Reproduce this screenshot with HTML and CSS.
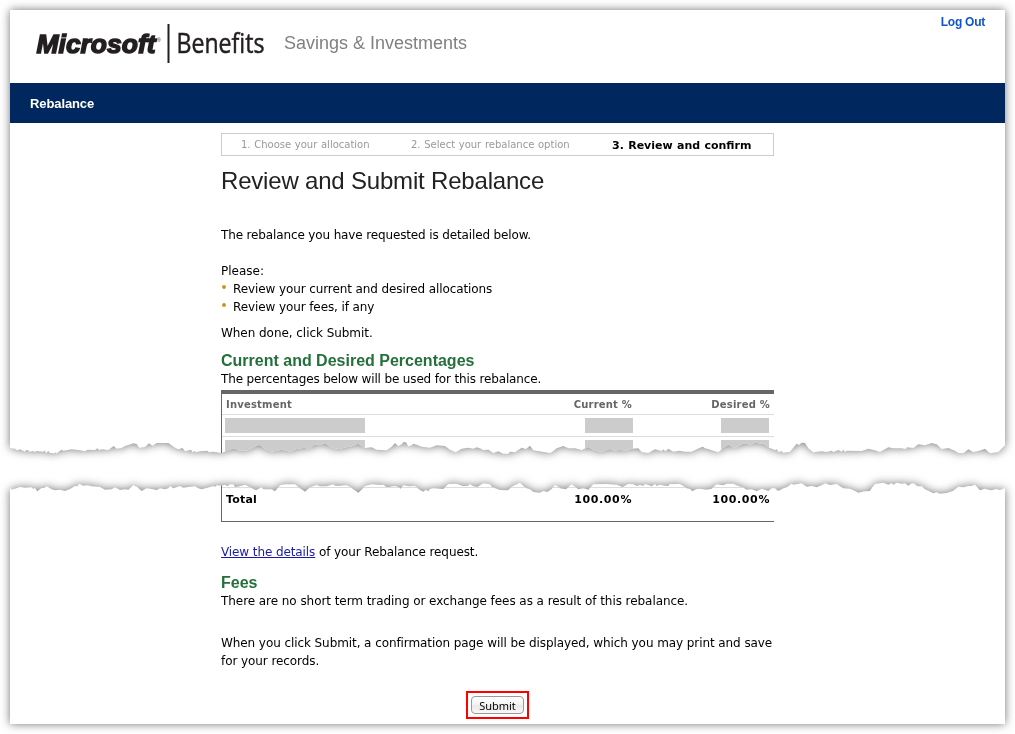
FILE: index.html
```html
<!DOCTYPE html>
<html lang="en">
<head>
<meta charset="utf-8">
<title>Review and Submit Rebalance</title>
<link rel="stylesheet" href="styles.css">
</head>
<body>
<svg class="defs" width="0" height="0" aria-hidden="true">
  <defs>
    <clipPath id="tear-lower" clipPathUnits="userSpaceOnUse">
      <polygon transform="translate(-10 370) scale(.33333)" points="30,-1110 30,204 45,206 51,211 60,208 75,215 78,210 85,211 88,215 100,213 104,216 110,213 130,215 133,211 138,219 145,213 150,219 165,220 168,215 170,221 175,216 185,209 190,212 215,208 240,211 255,214 262,209 285,210 292,205 297,210 305,208 325,210 341,198 350,206 365,204 375,198 388,194 400,190 410,192 418,203 435,201 447,190 458,197 470,189 505,189 525,203 535,208 548,204 555,214 573,209 578,217 584,213 588,217 600,214 622,212 626,216 640,215 665,219 680,213 693,208 705,206 718,212 740,212 760,203 770,197 780,195 795,208 815,215 845,209 870,215 890,207 915,203 925,208 945,193 960,196 975,190 995,204 1021,207 1021,-1110"/>
      <polygon transform="translate(330 370) scale(.33333)" points="-1,-1110 -1,207 20,202 35,199 55,191 65,198 75,204 95,202 110,209 125,210 140,211 155,200 165,189 175,198 185,193 190,187 198,187 205,199 215,196 220,191 232,195 245,200 270,203 290,196 315,198 330,209 347,217 365,206 385,203 400,206 410,202 420,205 430,210 445,209 460,219 475,214 490,221 505,221 510,215 525,217 545,203 558,207 570,197 580,211 605,215 630,219 635,217 650,205 670,198 685,205 705,205 725,210 745,201 765,212 785,215 810,207 825,212 840,209 860,213 875,206 895,205 905,216 925,219 945,208 965,213 970,208 976,214 985,206 1000,215 1021,212 1021,-1110"/>
      <polygon transform="translate(665 370) scale(.33333)" points="-1,-1110 -1,209 10,212 30,215 50,215 65,208 75,203 84,200 90,205 100,207 115,212 130,217 145,203 160,195 180,205 195,195 210,190 225,194 240,188 265,192 280,202 300,210 306,208 310,216 320,214 325,218 345,215 355,203 365,191 372,195 380,188 390,189 400,205 415,217 440,214 455,216 470,212 475,216 490,210 500,215 505,209 510,216 515,212 560,213 580,206 600,211 615,216 640,202 655,205 680,205 692,207 697,202 715,204 730,193 750,196 770,189 785,193 800,207 820,204 840,212 850,219 865,220 880,208 895,216 910,213 930,206 945,220 970,216 990,196 990,-1110"/>
    </clipPath>
    <clipPath id="tear-upper" clipPathUnits="userSpaceOnUse">
      <polygon transform="translate(-10 -100) scale(.33333)" points="30,1040 30,325 35,329 45,326 60,321 75,323 95,322 100,327 104,323 112,334 125,324 133,324 140,319 155,328 165,331 180,329 195,333 210,327 225,318 232,319 237,311 250,317 262,316 275,319 300,321 315,329 335,328 345,322 360,330 375,328 385,329 400,316 410,320 418,327 425,333 440,325 460,328 470,331 480,325 495,328 505,325 510,318 520,325 540,318 550,323 565,321 585,319 595,325 605,328 620,324 640,318 645,321 650,316 665,317 675,314 682,319 690,313 700,313 705,321 720,319 735,314 750,322 768,331 785,322 790,328 805,328 815,328 825,334 840,316 855,313 885,313 900,325 907,329 915,335 930,322 950,315 960,319 980,319 1000,313 1005,317 1021,318 1021,1040"/>
      <polygon transform="translate(330 -100) scale(.33333)" points="-1,1040 -1,317 20,316 30,320 40,328 55,338 65,329 75,318 95,313 120,315 130,314 140,322 150,320 165,318 175,321 182,326 190,316 205,319 225,318 240,330 250,335 257,329 265,334 270,327 280,325 310,327 318,319 325,312 350,311 370,319 385,317 390,312 398,318 412,321 430,310 450,313 456,321 470,326 480,330 495,331 505,330 515,320 530,313 540,308 550,318 560,325 570,328 580,336 600,338 610,333 622,336 635,327 645,315 652,319 660,325 678,328 688,319 695,313 705,320 715,328 730,325 745,329 760,313 800,312 830,314 848,321 855,317 865,312 880,313 890,318 900,315 910,318 915,312 925,315 935,319 945,312 950,318 960,314 975,317 985,318 990,312 1021,313 1021,1040"/>
      <polygon transform="translate(665 -100) scale(.33333)" points="-1,1040 -1,312 15,312 25,318 35,325 45,327 52,334 65,327 75,326 95,329 110,326 125,313 145,316 155,311 175,311 190,318 205,323 215,329 230,328 245,334 260,326 280,333 290,325 300,325 308,332 315,331 325,325 335,322 350,311 355,314 380,310 395,320 410,318 425,322 440,316 450,310 465,315 485,312 495,319 505,325 525,326 540,333 550,338 570,334 585,333 592,322 600,312 625,308 640,314 650,309 655,314 665,308 680,311 690,310 700,317 708,311 715,310 728,319 740,319 750,328 760,332 775,340 785,337 795,341 815,339 835,332 850,320 865,322 880,318 890,318 900,314 908,323 915,331 930,326 940,329 950,331 963,327 975,330 990,325 990,1040"/>
    </clipPath>
  </defs>
</svg>

<main class="page">
  <div class="shadow">
    <section class="sheet sheet-top">
      <header class="masthead">
        <svg class="logo" width="232" height="40" viewBox="0 0 232 40" role="img" aria-label="Microsoft Benefits">
          <text class="logo-ms" x="0.5" y="29" textLength="119" lengthAdjust="spacingAndGlyphs">Microsoft</text>
          <text class="logo-reg" x="121" y="18">®</text>
          <rect x="131.5" y="0" width="2" height="39" fill="#231f20"/>
          <text class="logo-benefits" x="140.5" y="29" textLength="88" lengthAdjust="spacingAndGlyphs">Benefits</text>
        </svg>
        <span class="tagline">Savings &amp; Investments</span>
        <a class="logout">Log Out</a>
      </header>
      <nav class="navbar">Rebalance</nav>
      <div class="content">
        <ol class="steps">
          <li class="step">1. Choose your allocation</li>
          <li class="step">2. Select your rebalance option</li>
          <li class="step current">3. Review and confirm</li>
        </ol>
        <h1>Review and Submit Rebalance</h1>
        <p class="intro">The rebalance you have requested is detailed below.</p>
        <p>Please:</p>
        <ul class="tasks">
          <li>Review your current and desired allocations</li>
          <li>Review your fees, if any</li>
        </ul>
        <p class="done">When done, click Submit.</p>
        <h2>Current and Desired Percentages</h2>
        <p class="note">The percentages below will be used for this rebalance.</p>
        <div class="table">
          <div class="row head"><span>Investment</span><span>Current %</span><span>Desired %</span></div>
          <div class="row masked"><i></i><i></i><i></i></div>
          <div class="row masked"><i></i><i></i><i></i></div>
        </div>
      </div>
    </section>
  </div>

  <div class="shadow">
    <section class="sheet sheet-bottom">
      <div class="content">
        <div class="table-end">
          <div class="row total"><span>Total</span><span>100.00%</span><span>100.00%</span></div>
        </div>
        <p class="details"><a>View the details</a> of your Rebalance request.</p>
        <h2>Fees</h2>
        <p class="fees">There are no short term trading or exchange fees as a result of this rebalance.</p>
        <p class="confirm">When you click Submit, a confirmation page will be displayed, which you may print and save for your records.</p>
        <div class="actions"><div class="highlight"><button type="button">Submit</button></div></div>
      </div>
    </section>
  </div>
</main>
</body>
</html>
```

FILE: styles.css
```css
* { box-sizing: border-box; }
body {
  margin: 0;
  width: 1015px;
  height: 734px;
  overflow: hidden;
  background: #fff;
  font: 12px/18px "DejaVu Sans", Verdana, sans-serif;
  color: #000;
}
.defs { position: absolute; }
.page { display: flex; flex-direction: column; gap: 26px; padding: 10px; }
.shadow { filter: drop-shadow(0 0 5px rgba(0, 0, 0, .55)); }
.sheet { width: 995px; background: #fff; overflow: hidden; }
.sheet-top { height: 444px; clip-path: url(#tear-lower); }
.sheet-bottom { height: 244px; clip-path: url(#tear-upper); }

.masthead { display: flex; height: 73px; padding: 0 20px 0 26px; font-family: "Liberation Sans", Arial, sans-serif; }
.logo { margin-top: 14px; overflow: visible; }
.logo-ms { font: italic bold 26.5px "Liberation Sans", Arial, sans-serif; fill: #231f20; stroke: #231f20; stroke-width: 1.5px; }
.logo-reg { font: 5px "Liberation Sans", Arial, sans-serif; fill: #231f20; }
.logo-benefits { font: 27px "Open Sans", "Noto Sans", sans-serif; fill: #231f20; stroke: #231f20; stroke-width: .5px; }
.tagline { margin: 22px 0 0 16px; font-size: 18px; line-height: 22px; color: #808080; }
.logout { margin: 3px 0 0 auto; font-size: 12px; font-weight: bold; line-height: 18px; letter-spacing: -.25px; color: #1155cc; }
.navbar { height: 40px; padding-left: 20px; background: #00285e; color: #fff; font: bold 13px/41px "Liberation Sans", Arial, sans-serif; letter-spacing: -.1px; }

.content { width: 553px; margin-left: 211px; }
p, h1, h2, ul, ol { margin: 0; padding: 0; }
ul, ol { list-style: none; }
.steps { display: flex; height: 23px; margin-top: 10px; border: 1px solid #ccc; padding-left: 19px; font-size: 10px; line-height: 21px; word-spacing: .5px; color: #999; }
.step:nth-child(1) { width: 170px; }
.step:nth-child(2) { width: 201px; }
.step.current { font-size: 11px; font-weight: bold; line-height: 23px; color: #000; }
h1 { margin-top: 11px; font: 24px/28px "Liberation Sans", Arial, sans-serif; letter-spacing: -.19px; color: #222; }
h2 { font: bold 16px/20px "Liberation Sans", Arial, sans-serif; color: #24703a; }
.intro { margin: 31px 0 18px; letter-spacing: -.137px; }
.tasks { letter-spacing: -.1px; }
.tasks li { display: flex; }
.tasks li::before { content: ""; width: 4px; height: 4px; margin: 5px 7px 0 1px; border-radius: 2px; background: #c9961f; }
.done { margin: 8px 0 9px; letter-spacing: -.05px; }
.note { margin-top: -1px; letter-spacing: -.148px; }

.table { margin-top: 2px; border-top: 4px solid #666; border-left: 1px solid #666; }
.table-end { height: 42px; padding-top: 7px; border-left: 1px solid #666; border-bottom: 1px solid #666; }
.row { display: grid; grid-template-columns: 1fr 136px 138px; padding: 0 4px; }
.row > :nth-child(n+2) { text-align: right; }
.head { height: 20px; font-size: 10px; font-weight: bold; line-height: 21px; letter-spacing: .2px; color: #666; }
.masked { grid-template-columns: 1fr 136px 136px; height: 22px; padding: 3px 5px 0 3px; border-top: 1px solid #ddd; }
.masked i { height: 15px; background: #ccc; }
.masked i:nth-child(1) { width: 140px; }
.masked i:nth-child(n+2) { width: 48px; justify-self: end; }
.total { border-top: 1px solid #ddd; font-size: 11px; font-weight: bold; line-height: 24px; letter-spacing: .2px; }
.total > :nth-child(n+2) { letter-spacing: .6px; }

.details { margin: 21px 0 12px; letter-spacing: -.1px; }
.details a { color: #1a1aa6; text-decoration: underline; }
.fees { margin-top: -1px; letter-spacing: -.06px; }
.confirm { margin-top: 24px; letter-spacing: -.08px; }
.actions { display: flex; padding: 21px 0 0 245px; }
.highlight { width: 63px; height: 28px; padding: 3px; border: 2px solid #f00; }
button { display: block; width: 53px; height: 18px; padding: 0; border: 1px solid #999; border-radius: 4px; background: linear-gradient(#fff, #f3f3f3 50%, #e9e9e9 51%, #f8f8f8); font: 11px/17px "Noto Sans", sans-serif; color: #000; }
```
